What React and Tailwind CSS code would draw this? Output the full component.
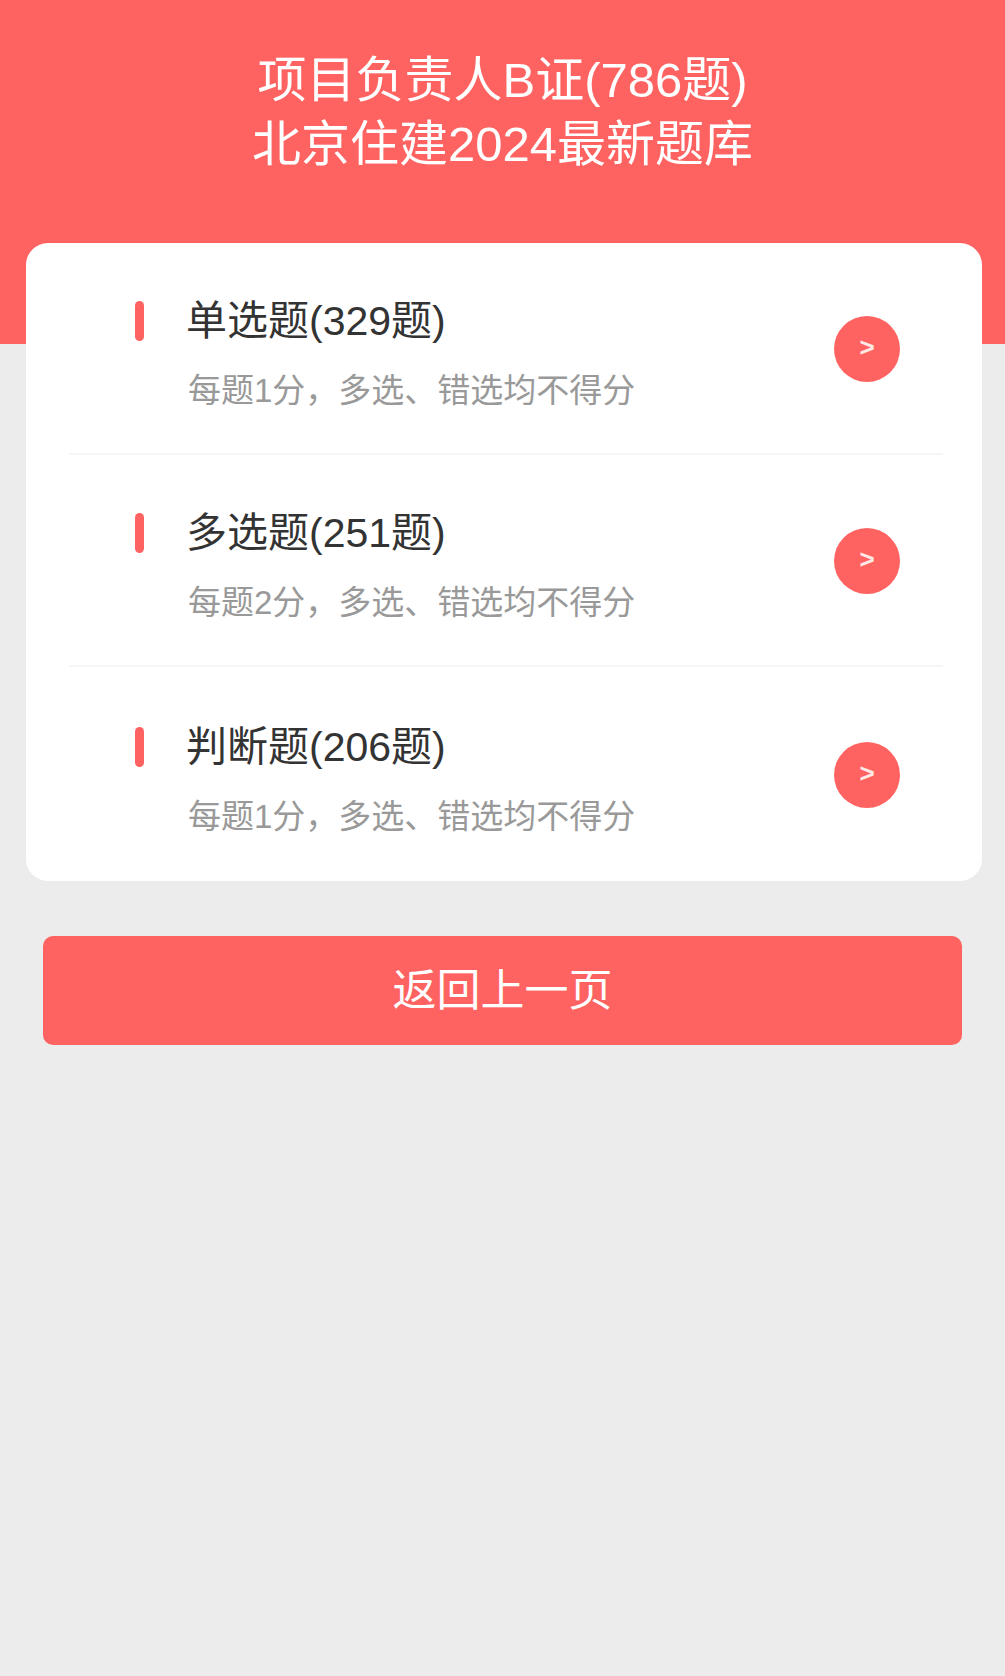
const items = [
  { title: "单选题(329题)", desc: "每题1分，多选、错选均不得分" },
  { title: "多选题(251题)", desc: "每题2分，多选、错选均不得分" },
  { title: "判断题(206题)", desc: "每题1分，多选、错选均不得分" },
];

export default function App() {
  return (
    <div className="min-h-screen bg-[#ececec] font-['Liberation_Sans','Noto_Sans_CJK_SC',sans-serif]">
      <div className="h-[344px] bg-[#ff6361] pt-[48px] text-center text-[49px] leading-[64px] text-white">
        <div>项目负责人B证(786题)</div>
        <div>北京住建2024最新题库</div>
      </div>

      <div className="ml-[26px] mr-[23px] -mt-[101px] relative rounded-[22px] bg-white">
        {items.map((item) => (
          <div
            key={item.title}
            className="ml-[43px] mr-[39px] flex h-[212px] items-center border-b-2 border-[#f6f6f6] pl-[66px] pr-[43px] last:h-[214px] last:border-b-0"
          >
            <div className="mt-[11px] flex-1">
              <div className="flex items-center">
                <span className="h-[40px] w-[9px] rounded-full bg-[#ff6361]" />
                <span className="ml-[42px] text-[41px] leading-[40px] text-[#333]">{item.title}</span>
              </div>
              <div className="ml-[53px] mt-[33px] text-[33px] leading-[33px] text-[#999]">{item.desc}</div>
            </div>
            <div className="mt-[1px] flex h-[66px] w-[66px] items-center justify-center rounded-full bg-[#ff6361] pb-[2px] text-[26px] font-bold text-[#ffe9e6]">
              &gt;
            </div>
          </div>
        ))}
      </div>

      <div className="mx-[43px] mt-[55px] flex h-[109px] items-center justify-center rounded-[10px] bg-[#ff6361] text-[44px] text-white">
        返回上一页
      </div>
    </div>
  );
}
